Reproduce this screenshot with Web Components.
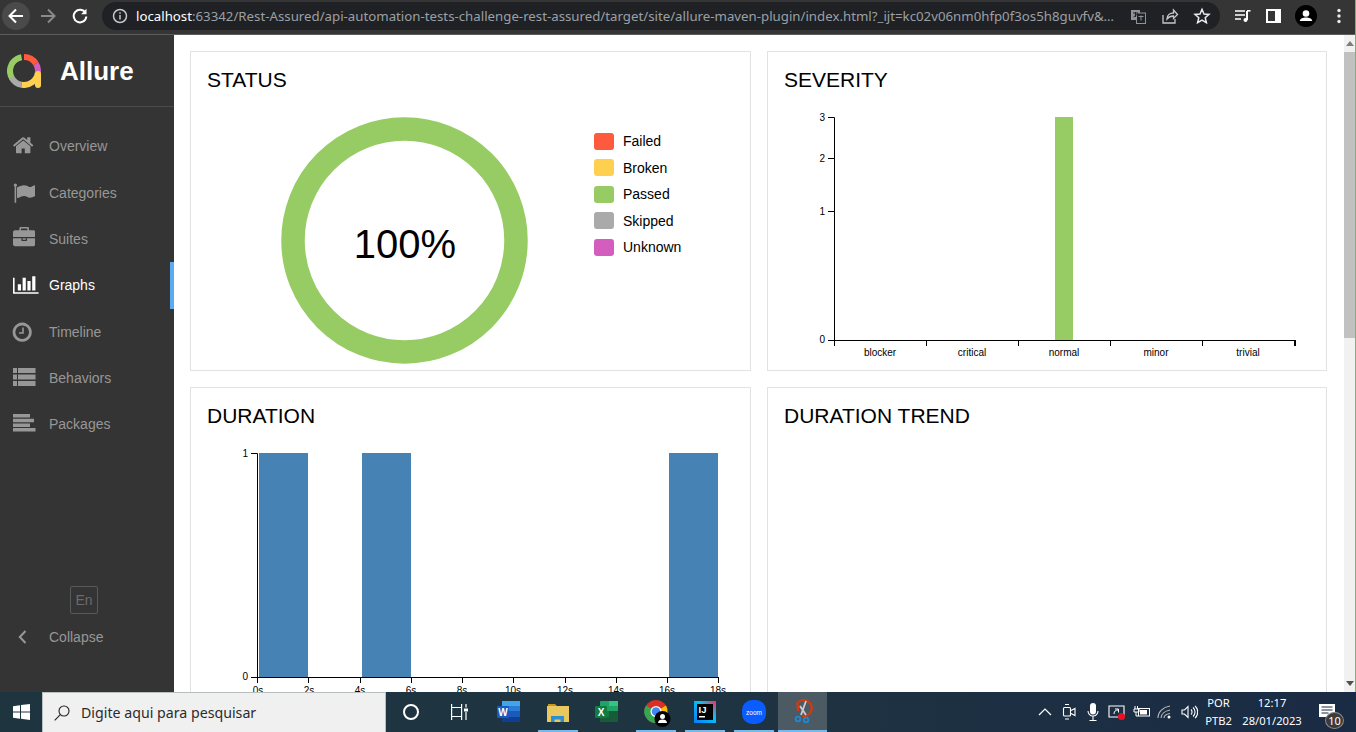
<!DOCTYPE html>
<html lang="en">
<head>
<meta charset="utf-8">
<title>Allure</title>
<style>
  html, body { margin: 0; height: 100%; overflow: hidden; background: #fff; }
  body { font-family: "Liberation Sans", Arial, sans-serif; }
</style>
</head>
<body>

<app-shell>
  <browser-bar slot="top"></browser-bar>
  <allure-sidebar slot="side">
    <nav-item>
      <svg slot="icon" style="margin:-3px 0 0 -1.2px" width="22.4" height="22.4" viewBox="0 0 1792 1792"><path d="M1472 992v480q0 26-19 45t-45 19h-384v-384h-256v384h-384q-26 0-45-19t-19-45v-480q0-1 .5-3t.5-3l575-474 575 474q1 2 1 6zm223-69l-62 74q-8 9-21 11h-3q-13 0-21-7l-692-577-692 577q-12 8-24 7-13-2-21-11l-62-74q-8-10-7-23.5t11-21.5l719-599q32-26 76-26t76 26l244 204v-195q0-14 9-23t23-9h192q14 0 23 9t9 23v408l219 182q10 8 11 21.5t-7 23.5z"/></svg>
      Overview
    </nav-item>
    <nav-item>
      <svg slot="icon" width="22.4" height="22.4" viewBox="0 0 1792 1792"><path d="M320 256q0 72-64 110v1266q0 13-9.5 22.5t-22.5 9.5h-64q-13 0-22.5-9.5t-9.5-22.5v-1266q-64-38-64-110 0-53 37.5-90.5t90.5-37.5 90.5 37.5 37.5 90.5zm1472 64v763q0 25-12.5 38.5t-39.5 27.5q-215 116-369 116-61 0-123.5-22t-108.5-48-115.5-48-142.5-22q-192 0-464 146-17 9-33 9-26 0-45-19t-19-45v-742q0-32 31-55 21-14 79-43 236-120 421-120 107 0 200 29t219 88q38 19 88 19 54 0 117.5-21t110-47 88-47 54.5-21q26 0 45 19t19 45z"/></svg>
      Categories
    </nav-item>
    <nav-item>
      <svg slot="icon" style="margin-top:-1.500px" width="22.4" height="22.4" viewBox="0 0 1792 1792"><path d="M640 256h512v-128h-512v128zm1152 640v480q0 66-47 113t-113 47h-1472q-66 0-113-47t-47-113v-480h672v160q0 26 19 45t45 19h320q26 0 45-19t19-45v-160h672zm-768 0v128h-256v-128h256zm768-480v384h-1792v-384q0-66 47-113t113-47h352v-160q0-40 28-68t68-28h576q40 0 68 28t28 68v160h352q66 0 113 47t47 113z"/></svg>
      Suites
    </nav-item>
    <nav-item active>
      <svg slot="icon" style="margin-top:-2px" width="25.6" height="22.4" viewBox="0 0 2048 1792"><path d="M640 896v512h-256v-512h256zm384-512v1024h-256v-1024h256zm1024 1152v128h-2048v-1280h128v1152h1920zm-640-896v768h-256v-768h256zm384-384v1152h-256v-1152h256z"/></svg>
      Graphs
    </nav-item>
    <nav-item>
      <svg slot="icon" style="margin-left:-1.6px" width="22.4" height="22.4" viewBox="0 0 1792 1792"><path d="M1024 544v448q0 14-9 23t-23 9h-320q-14 0-23-9t-9-23v-64q0-14 9-23t23-9h224v-352q0-14 9-23t23-9h64q14 0 23 9t9 23zm416 352q0-148-73-273t-198-198-273-73-273 73-198 198-73 273 73 273 198 198 273 73 273-73 198-198 73-273zm224 0q0 209-103 385.500t-279.500 279.500-385.500 103-385.500-103-279.500-279.500-103-385.500 103-385.500 279.500-279.500 385.500-103 385.500 103 279.500 279.500 103 385.500z"/></svg>
      Timeline
    </nav-item>
    <nav-item>
      <svg slot="icon" style="margin-top:-3px" width="23" height="18" viewBox="0 0 23 18"><path d="M0 0h4v5H0zM5 0h17.500v5H5zM0 6.500h4v5H0zM5 6.500h17.500v5H5zM0 13h4v5H0zM5 13h17.500v5H5z"/></svg>
      Behaviors
    </nav-item>
    <nav-item>
      <svg slot="icon" style="margin-top:-3px" width="23" height="18" viewBox="0 0 23 18"><path d="M0 0h17v3.500H0zM0 4.700h21v3.500H0zM0 9.400h17v3.500H0zM0 14.100h22.500v3.500H0z"/></svg>
      Packages
    </nav-item>
  </allure-sidebar>

  <graph-grid slot="main">
    <graph-card><span slot="title">STATUS</span><status-chart></status-chart></graph-card>
    <graph-card><span slot="title">SEVERITY</span><severity-chart></severity-chart></graph-card>
    <graph-card><span slot="title">DURATION</span><duration-chart></duration-chart></graph-card>
    <graph-card><span slot="title">DURATION TREND</span></graph-card>
  </graph-grid>

  <page-scrollbar slot="scroll"></page-scrollbar>
  <win-taskbar slot="bottom"></win-taskbar>
</app-shell>

<script>
// every component is only a template in a open shadow root
function define(tag, html) {
  const templateElement = document.createElement('template');
  templateElement.innerHTML = html;

  customElements.define(tag, class extends HTMLElement {
    constructor() {
      super();
      this.attachShadow({ mode: 'open' });
      this.shadowRoot.appendChild(templateElement.content.cloneNode(true));
    }
  });
}

define('app-shell', `
<style>
  :host { display: flex; flex-direction: column; height: 732px; overflow: hidden; position: relative; }
  .middle { flex: 1; min-height: 0; display: flex; }
  .main { flex: 1; min-width: 0; overflow: hidden; }
  /* the edge of the window behind the browser shows on the last pixel column */
  .edge { position: absolute; top: 0; right: 0; bottom: 40px; width: 1px; background: #8fb04a; }
</style>
<slot name="top"></slot>
<div class="middle">
  <slot name="side"></slot>
  <div class="main"><slot name="main"></slot></div>
  <slot name="scroll"></slot>
</div>
<slot name="bottom"></slot>
<div class="edge"></div>
`);

define('browser-bar', `
<style>
  :host { display: flex; height: 34px; box-sizing: content-box; background: #353535; border-bottom: 1px solid #5c5c5c; color: #e8eaed; font-family: "Noto Sans", sans-serif; }
  .btn { width: 32px; height: 32px; flex: none; display: flex; align-items: center; justify-content: center; }
  .back { width: 28px; height: 28px; border-radius: 50%; background: #4a4a4a; display: flex; align-items: center; justify-content: center; }
  .address { flex: 1; min-width: 0; margin: 2px 8px 0 6px; height: 28px; border-radius: 14px; background: #202124; display: flex; align-items: center; padding-left: 10px; padding-right: 2px; }
  .info { width: 24px; flex: none; display: flex; }
  .url { flex: 1; min-width: 0; white-space: nowrap; overflow: hidden; font-size: 13.26px; color: #9aa0a6; }
  .url b { font-weight: 400; color: #fff; }
  svg { display: block; }
</style>
<div class="btn"><div class="back"><svg width="18" height="18" viewBox="0 0 18 18" fill="none" stroke="#fff" stroke-width="2"><path d="M16 9H3M9 2.500 2.500 9 9 15.500"/></svg></div></div>
<div class="btn"><svg width="18" height="18" viewBox="0 0 18 18" fill="none" stroke="#8a8a8a" stroke-width="2"><path d="M2 9h13M9 2.500 15.500 9 9 15.500"/></svg></div>
<div class="btn"><svg width="18" height="18" viewBox="0 0 18 18" fill="none" stroke="#fff" stroke-width="2"><path d="M14.500 6A6.300 6.300 0 1 0 15.300 9.500"/><path d="M15.500 1.800v5.400h-5.400z" fill="#fff" stroke="none"/></svg></div>
<div class="address">
  <div class="info"><svg width="16" height="16" viewBox="0 0 16 16" fill="none" stroke="#c4c7ca" stroke-width="1.500"><circle cx="8" cy="8" r="6.500"/><path d="M8 7v4.500M8 4.200v1.600"/></svg></div>
  <div class="url"><b>localhost</b>:63342/Rest-Assured/api-automation-tests-challenge-rest-assured/target/site/allure-maven-plugin/index.html?_ijt=kc02v06nm0hfp0f3os5h8guvfv&amp;…</div>
  <div class="btn"><svg width="15" height="15" viewBox="0 0 15 15"><rect x="0" y="1" width="9" height="10" fill="#8f9498"/><rect x="5.500" y="4" width="9" height="10.500" fill="#202124" stroke="#8f9498"/><path d="M2 4h5M4.500 3v5M2.500 8l4-3" stroke="#202124" fill="none"/><path d="M7.500 7.500h5M10 6.500v5" stroke="#8f9498"/></svg></div>
  <div class="btn"><svg width="18" height="18" viewBox="0 0 18 18" fill="none" stroke="#c4c7ca" stroke-width="1.300"><path d="M2 8v8h12v-4"/><path d="M6 12c0-4 3-6 6.500-6V3l4 4.500-4 4V9C9.500 9 7.500 10 6 12z"/></svg></div>
  <div class="btn"><svg width="18" height="18" viewBox="0 0 18 18" fill="none" stroke="#e8eaed" stroke-width="1.500"><path d="M9 2.300 11 7l5 .4-3.800 3.300 1.200 4.900L9 13l-4.400 2.600 1.200-4.900L2 7.400 7 7z"/></svg></div>
</div>
<div class="btn" style="width:29px"><svg width="16" height="14" viewBox="0 0 16 14" fill="none" stroke="#fff" stroke-width="1.500"><path d="M0 2h10M0 6h10M0 10h6"/><path d="M12 2v9" stroke-width="2"/><circle cx="10.500" cy="11" r="2" fill="#fff" stroke="none"/><path d="M12 1.800h3.500" stroke-width="1.600"/></svg></div>
<div class="btn"><svg width="15" height="14" viewBox="0 0 15 14"><rect width="15" height="14" fill="#fff"/><rect x="2" y="2" width="7" height="10" fill="#353535"/></svg></div>
<div class="btn" style="width:33px"><svg width="22" height="22" viewBox="0 0 22 22"><circle cx="11" cy="11" r="11" fill="#000"/><circle cx="11" cy="8.500" r="3.300" fill="#fff"/><path d="M4.800 16c0-2.500 3.500-3.600 6.200-3.600s6.200 1.100 6.200 3.600z" fill="#fff"/></svg></div>
<div class="btn" style="width:34px"><svg width="4" height="16" viewBox="0 0 4 16" fill="#e8eaed"><circle cx="2" cy="2.500" r="1.700"/><circle cx="2" cy="8" r="1.700"/><circle cx="2" cy="13.500" r="1.700"/></svg></div>
`);

define('allure-sidebar', `
<style>
  :host { display: flex; flex-direction: column; width: 174px; height: 100%; flex: none; background: #343434; color: #fff; }
  .brand { height: 71px; display: flex; align-items: center; border-bottom: 1px solid #4b4b4b; padding-left: 7px; gap: 19px; }
  .brand span { font-size: 26px; font-weight: 700; padding-top: 2px; }
  nav { padding-top: 16.3px; display: flex; flex-direction: column; }
  .foot { margin-top: auto; padding-bottom: 32px; }
  .lang { box-sizing: border-box; width: 28px; height: 28px; margin-left: 70px; border: 1px solid #5a5a5a; border-radius: 2px; color: #6b6b6b; font-size: 14px; display: flex; align-items: center; justify-content: center; }
  svg { display: block; }
</style>
<div class="brand">
  <svg width="34" height="34" viewBox="0 0 34 34" fill="none" stroke-width="6">
    <circle cx="17" cy="17" r="14" stroke="#97cc64" pathLength="360" stroke-dasharray="110 360" transform="rotate(150 17 17)"/>
    <circle cx="17" cy="17" r="14" stroke="#aaa" pathLength="360" stroke-dasharray="52 360" transform="rotate(100 17 17)"/>
    <circle cx="17" cy="17" r="14" stroke="#ffd050" pathLength="360" stroke-dasharray="92 360" transform="rotate(8 17 17)"/>
    <circle cx="17" cy="17" r="14" stroke="#d35ebe" pathLength="360" stroke-dasharray="40 360" transform="rotate(-32 17 17)"/>
    <circle cx="17" cy="17" r="14" stroke="#fd5a3e" pathLength="360" stroke-dasharray="58 360" transform="rotate(-90 17 17)"/>
    <path d="M31 20v11" stroke="#ffd050" stroke-linecap="round"/>
  </svg>
  <span>Allure</span>
</div>
<nav><slot></slot></nav>
<div class="foot">
  <div class="lang">En</div>
  <nav-item>
    <svg slot="icon" style="fill:none" width="24" height="24" viewBox="0 0 24 24" stroke="currentColor" stroke-width="2"><path d="M12.500 6 6.800 12l5.700 6"/></svg>
    Collapse
  </nav-item>
</div>
`);

define('nav-item', `
<style>
  :host { display: flex; align-items: center; height: 46.33px; box-sizing: border-box; padding-left: 13px; color: #979797; font-size: 14px; }
  :host([active]) { color: #fff; box-shadow: inset -4px 0 0 #5aabf2; }
  .icon { width: 36px; flex: none; display: flex; }
  ::slotted(svg) { fill: currentColor; display: block; }
</style>
<div class="icon"><slot name="icon"></slot></div>
<slot></slot>
`);

define('graph-grid', `
<style>
  :host { display: grid; grid-template-columns: 561px 560px; grid-auto-rows: 320px; gap: 16px; padding: 16px; }
</style>
<slot></slot>
`);

define('graph-card', `
<style>
  :host { display: block; box-sizing: border-box; border: 1px solid #e2e2e2; padding: 16px; overflow: hidden; min-width: 0; }
  h2 { margin: 0 0 16px; font-size: 21px; line-height: 24px; font-weight: 400; color: #000; }
</style>
<h2><slot name="title"></slot></h2>
<slot></slot>
`);

define('status-chart', `
<style>
  :host { display: flex; }
  svg { display: block; flex: none; }
  ul { list-style: none; margin: 20.3px 0 0; padding: 0; font-size: 14px; color: #000; }
  li { display: flex; align-items: center; height: 26.4px; gap: 9px; }
  i { width: 20px; height: 17px; border-radius: 3px; display: block; }
</style>
<svg width="387" height="262" viewBox="207 108 387 262">
  <circle cx="404.500" cy="240.500" r="111.500" fill="none" stroke="#97cc64" stroke-width="23.500"/>
  <text x="405" y="258" text-anchor="middle" font-size="40" fill="#000">100%</text>
</svg>
<ul>
  <li><i style="background:#fd5a3e"></i>Failed</li>
  <li><i style="background:#ffd050"></i>Broken</li>
  <li><i style="background:#97cc64"></i>Passed</li>
  <li><i style="background:#aaa"></i>Skipped</li>
  <li><i style="background:#d35ebe"></i>Unknown</li>
</ul>
`);

define('severity-chart', `
<style>
  :host { display: block; }
  svg { display: block; }
  text { font-size: 10px; fill: #000; }
  .x { text-anchor: middle; }
  .y { text-anchor: end; }
  path { stroke: #000; fill: none; }
</style>
<svg width="526" height="262" viewBox="784 108 526 262">
  <rect x="1055" y="117" width="18" height="223" fill="#97cc64"/>
  <path d="M828 117.500H834.500V340.500H828M834.500 340.500H1295"/>
  <path d="M828 158.500H834M828 211.500H834"/>
  <path d="M834.500 340v6M926.500 340v6M1018.500 340v6M1110.500 340v6M1202.500 340v6"/>
  <path d="M1295 340v6" stroke-width="2"/>
  <text class="y" x="825" y="121">3</text>
  <text class="y" x="825" y="162">2</text>
  <text class="y" x="825" y="215">1</text>
  <text class="y" x="825" y="343">0</text>
  <text class="x" x="880" y="356">blocker</text>
  <text class="x" x="972" y="356">critical</text>
  <text class="x" x="1064" y="356">normal</text>
  <text class="x" x="1156" y="356">minor</text>
  <text class="x" x="1248" y="356">trivial</text>
</svg>
`);

define('duration-chart', `
<style>
  :host { display: block; }
  svg { display: block; }
  text { font-size: 10px; fill: #000; }
  .x { text-anchor: middle; }
  .y { text-anchor: end; }
  path { stroke: #000; fill: none; }
</style>
<svg width="527" height="262" viewBox="207 444 527 262">
  <rect x="259" y="453" width="49" height="224" fill="#4682b4"/>
  <rect x="362" y="453" width="49" height="224" fill="#4682b4"/>
  <rect x="669" y="453" width="49" height="224" fill="#4682b4"/>
  <path d="M251 453.500H257.500V677.500H251M257.500 677.500H718"/>
  <path d="M257.500 677v6M308.500 677v6M360.500 677v6M411.500 677v6M462.500 677v6M513.500 677v6M565.500 677v6M616.500 677v6M667.500 677v6M718.500 677v6"/>
  <text class="y" x="248" y="457">1</text>
  <text class="y" x="248" y="680">0</text>
  <text class="x" x="258" y="694">0s</text>
  <text class="x" x="309" y="694">2s</text>
  <text class="x" x="360" y="694">4s</text>
  <text class="x" x="411" y="694">6s</text>
  <text class="x" x="462" y="694">8s</text>
  <text class="x" x="513" y="694">10s</text>
  <text class="x" x="565" y="694">12s</text>
  <text class="x" x="616" y="694">14s</text>
  <text class="x" x="667" y="694">16s</text>
  <text class="x" x="718" y="694">18s</text>
</svg>
`);

define('page-scrollbar', `
<style>
  :host { display: flex; flex-direction: column; width: 12px; flex: none; background: #f1f1f1; box-sizing: border-box; }
  .arrow { height: 17px; display: flex; align-items: center; justify-content: center; flex: none; }
  .thumb { height: 286px; background: #c1c1c1; flex: none; }
  .rest { flex: 1; }
  i { width: 0; height: 0; border-left: 4px solid transparent; border-right: 4px solid transparent; }
  .up { border-bottom: 5px solid #7d7d7d; }
  .down { border-top: 5px solid #505050; }
</style>
<div class="arrow"><i class="up"></i></div>
<div class="thumb"></div>
<div class="rest"></div>
<div class="arrow"><i class="down"></i></div>
`);

define('win-taskbar', `
<style>
  :host { display: flex; height: 40px; flex: none; background: linear-gradient(90deg, #1e3540 0%, #1f3441 50%, #1a2b44 100%); color: #fff; font-family: "Noto Sans", sans-serif; }
  .start { width: 42px; flex: none; display: flex; align-items: center; justify-content: center; }
  .search { width: 344px; flex: none; box-sizing: border-box; background: #f0f0f0; border: 1px solid #b9bec1; border-bottom: 0; display: flex; align-items: center; padding-left: 11px; gap: 11px; color: #2b2b2b; font-size: 14.2px; }
  .app { width: 49px; flex: none; box-sizing: border-box; display: flex; align-items: center; justify-content: center; position: relative; }
  .app.run::after { content: ""; position: absolute; left: 5px; right: 4px; bottom: 0; height: 2px; background: #76b9ed; }
  .app.on { background: #4c5a63; }
  .app.on::after { left: 0; right: 0; }
  .tray { margin-left: auto; display: flex; align-items: center; }
  .tico { width: 24px; display: flex; align-items: center; justify-content: center; }
  .lang, .clock { text-align: center; font-size: 11.2px; line-height: 18px; }
  .lang { width: 35px; }
  .clock { width: 64px; margin-left: 4px; }
  .note { width: 52px; height: 40px; position: relative; }
  .note svg { position: absolute; left: 15px; top: 12px; }
  .badge { position: absolute; left: 21px; top: 20px; width: 19px; height: 17px; border-radius: 50%; background: #3b3b3b; border: 1px solid #8c8c8c; box-sizing: border-box; font-size: 11px; line-height: 15px; text-align: center; }
  svg { display: block; }
</style>
<div class="start"><svg width="17" height="16" viewBox="0 0 17 16" fill="#fff"><path d="M0 2.300 7 1.300V7.500H0zM8 1.100 17 0V7.500H8zM0 8.500h7v6.200l-7-1zM8 8.500h9V16l-9-1.200z"/></svg></div>
<div class="search">
  <svg width="16" height="16" viewBox="0 0 16 16" fill="none" stroke="#222" stroke-width="1.100"><circle cx="10" cy="6" r="5"/><path d="M6.300 9.700 .7 15.300"/></svg>
  <span>Digite aqui para pesquisar</span>
</div>
<div class="app"><svg width="16" height="16" viewBox="0 0 16 16" fill="none" stroke="#fff" stroke-width="2"><circle cx="8" cy="8" r="7"/></svg></div>
<div class="app"><svg width="17" height="16" viewBox="0 0 17 16" fill="none" stroke="#fff" stroke-width="1.200"><path d="M.6 0v16M10.600 0v16M0 3.500h11M0 12.500h11M15 0v3.500M15 8v8"/><rect x="13" y="4.500" width="4" height="3" fill="#fff" stroke="none"/></svg></div>
<div class="app"><svg width="26" height="24" viewBox="0 0 26 24"><rect x="6" y="1" width="18" height="21" rx="1" fill="#2b7cd3"/><rect x="6" y="1" width="18" height="5" fill="#41a5ee"/><rect x="6" y="11" width="18" height="6" fill="#185abd"/><rect x="6" y="17" width="18" height="5" fill="#103f91"/><rect x="1" y="6" width="12" height="12" rx="1" fill="#185abd"/><text x="7" y="15.500" text-anchor="middle" font-size="10" font-weight="700" fill="#fff" font-family="Liberation Sans">W</text></svg></div>
<div class="app run"><svg width="22" height="19" viewBox="0 0 22 19"><path d="M1 1h7l2 2H1z" fill="#c9951f"/><rect x="0" y="3" width="22" height="16" fill="#e9c860"/><path d="M4 19v-6h13v6h-3.500v-2.500h-6V19z" fill="#2d8ed0"/></svg></div>
<div class="app"><svg width="26" height="24" viewBox="0 0 26 24"><rect x="6" y="1" width="18" height="21" rx="1" fill="#21a366"/><rect x="15" y="1" width="9" height="5" fill="#33c481"/><rect x="6" y="11" width="9" height="6" fill="#107c41"/><rect x="15" y="11" width="9" height="6" fill="#185c37"/><rect x="6" y="17" width="18" height="5" fill="#185c37"/><rect x="1" y="6" width="12" height="12" rx="1" fill="#107c41"/><text x="7" y="15.500" text-anchor="middle" font-size="10" font-weight="700" fill="#fff" font-family="Liberation Sans">X</text></svg></div>
<div class="app run"><svg style="overflow:visible" width="28" height="28" viewBox="0 0 28 28"><g transform="translate(2 1.500)"><circle cx="12" cy="12" r="11.500" fill="#d93025"/><path d="M12 12 2 18A11.500 11.500 0 0 1 2 6z" fill="#34a853"/><path d="M12 12 2 18A11.500 11.500 0 0 0 19 21z" fill="#34a853"/><path d="M12 12 22 6A11.500 11.500 0 0 1 19 21z" fill="#fbbc04"/><circle cx="12" cy="12" r="5.500" fill="#fff"/><circle cx="12" cy="12" r="4.300" fill="#4285f4"/></g><circle cx="20.500" cy="21" r="8" fill="#000"/><circle cx="20.500" cy="18.500" r="2.500" fill="#fff"/><path d="M16 25c0-2.500 2-3.500 4.500-3.500s4.500 1 4.500 3.500z" fill="#fff"/></svg></div>
<div class="app run"><svg width="22" height="22" viewBox="0 0 22 22"><defs><linearGradient id="ij" x1="0" y1="1" x2="1" y2="0"><stop offset="0" stop-color="#087cfa"/><stop offset=".6" stop-color="#07c3f2"/><stop offset="1" stop-color="#fe2857"/></linearGradient></defs><rect width="22" height="22" fill="url(#ij)"/><rect x="3" y="3" width="16" height="16" fill="#000"/><text x="4.500" y="11.500" font-size="9.500" font-weight="700" fill="#fff" font-family="Liberation Sans">IJ</text><rect x="5" y="15" width="6" height="1.500" fill="#fff"/></svg></div>
<div class="app run"><svg width="24" height="24" viewBox="0 0 24 24"><rect width="24" height="24" rx="10" fill="#0b5cff"/><text x="12" y="14.500" text-anchor="middle" font-size="6.500" fill="#fff" font-family="Liberation Sans">zoom</text></svg></div>
<div class="app run on"><svg width="20" height="26" viewBox="0 0 20 26" fill="none"><path d="M5 3.500A8 8 0 1 1 9 17" stroke="#cf3a12" stroke-width="2.400"/><path d="M4.500 3 5 12" stroke="#cf3a12" stroke-width="2.400"/><path d="M13 2 8 16M7 7l6 9" stroke="#ccc" stroke-width="1.800"/><circle cx="5" cy="20" r="2.300" stroke="#1e88d2" stroke-width="1.800"/><circle cx="13" cy="21" r="2.300" stroke="#1e88d2" stroke-width="1.800"/></svg></div>
<div class="tray">
  <div class="tico"><svg width="14" height="8" viewBox="0 0 14 8" fill="none" stroke="#fff" stroke-width="1.200"><path d="M1 7 7 1l6 6"/></svg></div>
  <div class="tico"><svg width="14" height="18" viewBox="0 0 14 18" fill="none" stroke="#fff" stroke-width="1.100"><path d="M1.500 5.500V12a1 1 0 0 0 1 1h5a1 1 0 0 0 1-1V5.500a1 1 0 0 0-1-1h-5a1 1 0 0 0-1 1z"/><path d="m9 7.500 4-2v7L9 10.500"/><path d="M3 1.500h4M3 16h4"/></svg></div>
  <div class="tico"><svg width="12" height="20" viewBox="0 0 12 20" fill="#fff"><rect x="3" y="1" width="6" height="11.500" rx="3"/><path d="M1 9a5 5 0 0 0 10 0M6 14v4M2.500 18.500h7" fill="none" stroke="#fff" stroke-width="1.100"/></svg></div>
  <div class="tico"><svg width="18" height="18" viewBox="0 0 18 18"><path d="M1 3h15v11H1z" fill="none" stroke="#fff" stroke-width="1.100"/><path d="M6 11c0-3 2-4 4-4M7 6h3.500v3.500" fill="none" stroke="#fff"/><circle cx="13.500" cy="13.500" r="3.500" fill="#e81123"/></svg></div>
  <div class="tico"><svg width="18" height="14" viewBox="0 0 18 14" fill="#fff"><path d="M3 1v3M5.500 1v3M2 4h5v3H2zM4 7v4h2" stroke="#fff" fill="none"/><rect x="6.500" y="3.500" width="11" height="7.500" fill="none" stroke="#fff"/><rect x="8" y="5" width="7" height="4.500"/></svg></div>
  <div class="tico"><svg width="16" height="14" viewBox="0 0 16 14" fill="none" stroke="#bbb" stroke-width="1.100"><path d="M1 13C1 7 6 2 13 1M4 13c0-4 4-7 9-8M7 13c0-2.500 3-4 6-4.500"/><circle cx="12" cy="12" r="1.500" fill="#fff" stroke="none"/></svg></div>
  <div class="tico"><svg width="17" height="14" viewBox="0 0 17 14" fill="none" stroke="#fff" stroke-width="1.100"><path d="M1 5v4h2.500L7 12.500v-11L3.500 5zM10 4.500a3.500 3.500 0 0 1 0 5M12 2.500a6 6 0 0 1 0 9M14 .8a8.500 8.500 0 0 1 0 12.400"/></svg></div>
  <div class="lang">POR<br>PTB2</div>
  <div class="clock">12:17<br>28/01/2023</div>
  <div class="note">
    <svg width="16" height="13" viewBox="0 0 16 13" fill="#fff"><path d="M0 0h16v13H0z"/><path d="M2.500 3h11M2.500 6h11M2.500 9h7" stroke="#1a2b44"/></svg>
    <div class="badge">10</div>
  </div>
</div>
`);
</script>
</body>
</html>
